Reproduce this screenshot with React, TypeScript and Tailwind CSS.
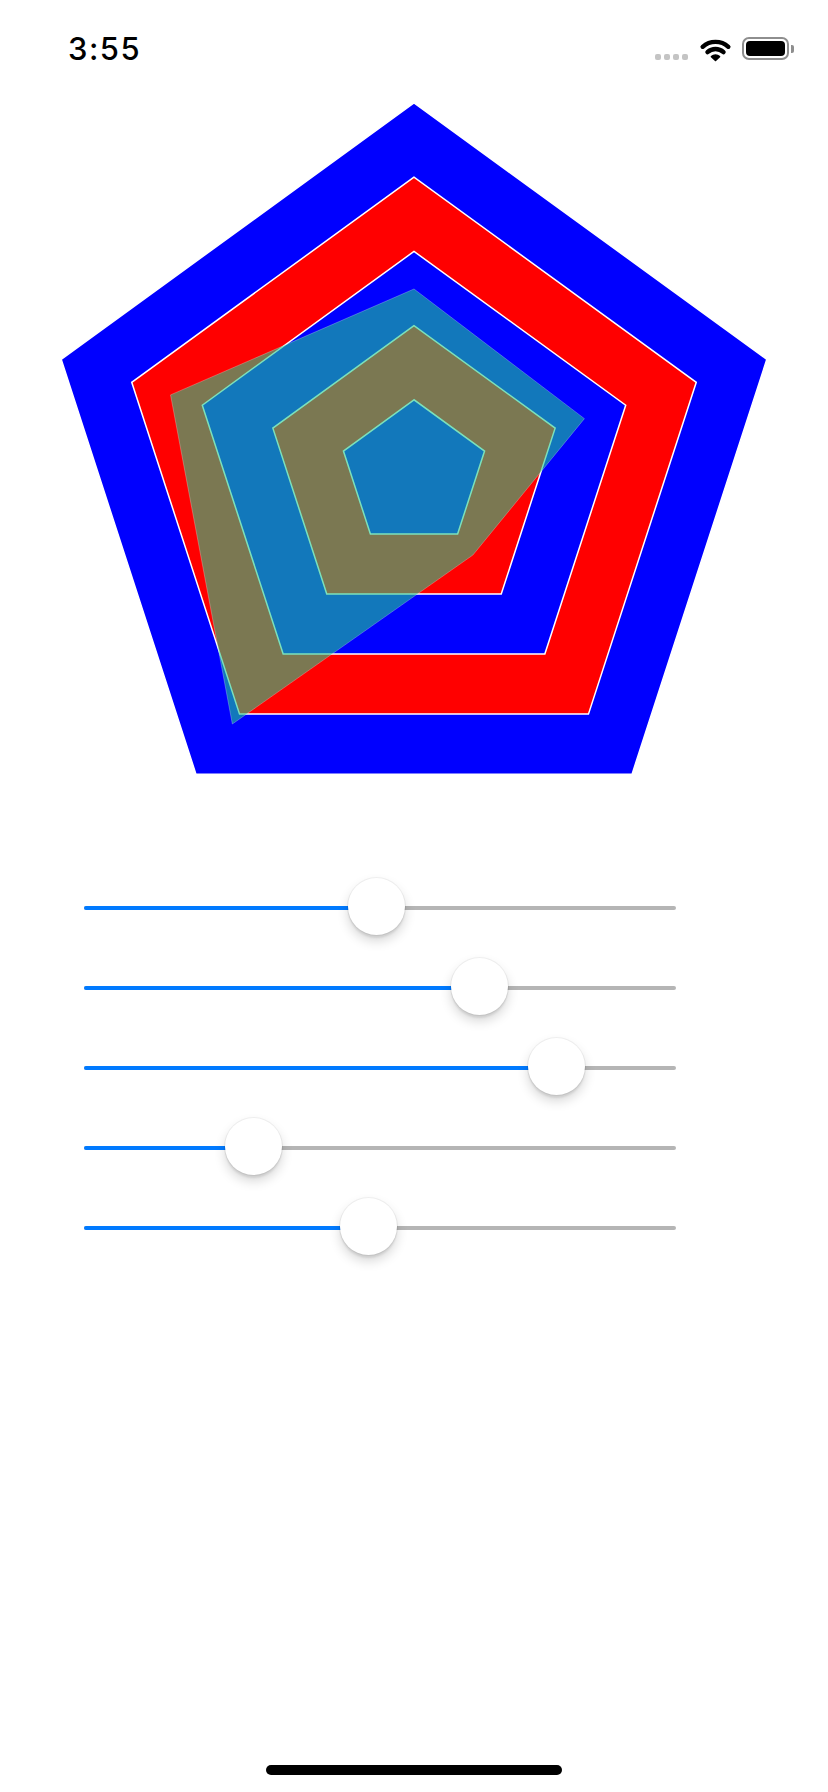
import React from 'react';

// radar chart geometry (svg local coords)
const CX = 414;
const CY = 394;
const R = 371;

const values = [0.4987, 0.69, 0.833, 0.27, 0.483];

const point = (i: number, r: number) => {
  const a = ((-90 - 72 * i) * Math.PI) / 180;
  return `${(CX + r * Math.cos(a)).toFixed(2)},${(CY + r * Math.sin(a)).toFixed(2)}`;
};

const ring = (scale: number) =>
  [0, 1, 2, 3, 4].map((i) => point(i, R * scale)).join(' ');

const rings = [
  { scale: 1, color: '#0000ff' },
  { scale: 0.8, color: '#ff0000' },
  { scale: 0.6, color: '#0000ff' },
  { scale: 0.4, color: '#ff0000' },
  { scale: 0.2, color: '#0000ff' },
];

const StatusBar = () => (
  <div className="h-[80px] flex justify-between items-start">
    <div
      className="ml-[68px] mt-[33px] text-[31px] leading-[31px] font-medium tracking-[1.5px] text-black"
      style={{ fontFamily: 'Inter, "Liberation Sans", sans-serif' }}
    >
      3:55
    </div>
    <div className="flex items-start pt-[37px] pr-[34px]">
      {/* no signal dots */}
      <div className="flex gap-[3px] mt-[17px]">
        <div className="w-[6px] h-[6px] rounded-[2px] bg-[#c4c4c4]" />
        <div className="w-[6px] h-[6px] rounded-[2px] bg-[#c4c4c4]" />
        <div className="w-[6px] h-[6px] rounded-[2px] bg-[#c4c4c4]" />
        <div className="w-[6px] h-[6px] rounded-[2px] bg-[#c4c4c4]" />
      </div>
      {/* wifi */}
      <svg width="33" height="24" viewBox="0 0 33 25" className="ml-[11px] mt-[1px]">
        <path
          d="M3.12 9.14 A20 20 0 0 1 29.88 9.14"
          fill="none"
          stroke="black"
          strokeWidth="4.6"
          strokeLinecap="round"
        />
        <path
          d="M8.14 14.71 A12.5 12.5 0 0 1 24.86 14.71"
          fill="none"
          stroke="black"
          strokeWidth="4.6"
          strokeLinecap="round"
        />
        <path
          d="M16.5 23.5 L12.3 19.4 A6 6 0 0 1 20.7 19.4 Z"
          fill="black"
          stroke="black"
          strokeWidth="1.6"
          strokeLinejoin="round"
        />
      </svg>
      {/* battery */}
      <div className="flex items-center ml-[10px]">
        <div className="w-[47px] h-[23px] rounded-[7px] border-2 border-[#8e8e8e] p-[2px]">
          <div className="w-full h-full rounded-[4px] bg-black" />
        </div>
        <div className="w-[3px] h-[8px] ml-[2px] rounded-r-[2px] bg-[#8e8e8e]" />
      </div>
    </div>
  </div>
);

const Slider = ({ value }: { value: number }) => {
  const center = 24.3 + value * 538.4;
  return (
    <div className="relative h-[80px] w-[592px] ml-[84px] flex items-center">
      <div className="relative w-full h-[4px] rounded-full bg-[#b5b5b5]">
        <div
          className="absolute left-0 top-0 h-full rounded-full bg-[#007aff]"
          style={{ width: center }}
        />
      </div>
      <div
        className="absolute top-[10px] w-[57px] h-[57px] rounded-full bg-white shadow-[0_6px_12px_rgba(0,0,0,0.16),0_3px_2px_rgba(0,0,0,0.08),0_0_0_1px_rgba(0,0,0,0.05)]"
        style={{ left: center - 28.5 }}
      />
    </div>
  );
};

export default function App() {
  const data = values.map((v, i) => point(i, R * v)).join(' ');
  return (
    <div className="w-[828px] h-[1792px] bg-white flex flex-col overflow-hidden">
      <StatusBar />

      <svg width="828" height="720" viewBox="0 0 828 720" className="block">
        {rings.map((r) => (
          <polygon
            key={r.scale}
            points={ring(r.scale)}
            fill={r.color}
            stroke="white"
            strokeWidth="1.5"
          />
        ))}
        <polygon
          points={data}
          fill="rgba(30,204,140,0.59)"
          stroke="rgba(255,255,255,0.25)"
          strokeWidth="1"
        />
      </svg>

      <div className="mt-[68px] flex flex-col">
        {values.map((v, i) => (
          <Slider key={i} value={v} />
        ))}
      </div>

      {/* home indicator */}
      <div className="mt-auto mb-[17px] mx-auto w-[296px] h-[10px] rounded-full bg-black" />
    </div>
  );
}
